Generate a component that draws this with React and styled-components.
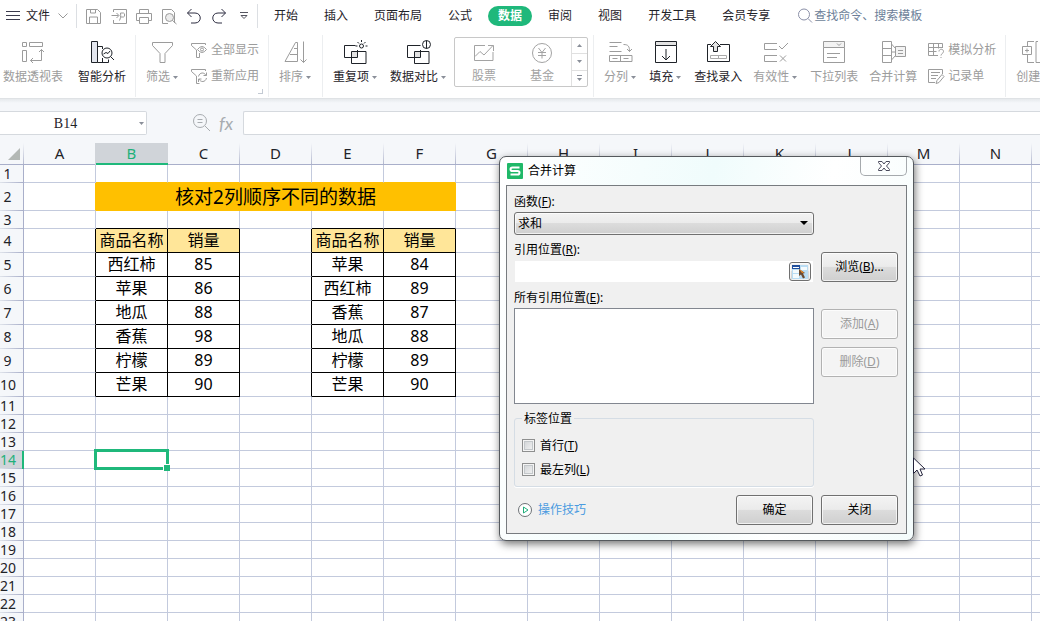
import styled, { createGlobalStyle, css } from "styled-components";

const columns = "ABCDEFGHIJKLMNO".split("");
const rowNumbers = Array.from({ length: 23 }, (_, i) => i + 1);

const leftTable = [["西红柿", 85], ["苹果", 86], ["地瓜", 88], ["香蕉", 98], ["柠檬", 89], ["芒果", 90]];
const rightTable = [["苹果", 84], ["西红柿", 89], ["香蕉", 87], ["地瓜", 88], ["柠檬", 89], ["芒果", 90]];

const icons = {
    save: <path d="M.5 1.5h11l3 3v11H.5zM3.5 15v-6h8v6M4.5 2v3h5V2" />,
    exportPdf: <path d="M2.5 4V1.5h13v14h-13V12M.5 7.5h7M5.5 5l2.5 2.5L5.5 10M8.500 12.500c1-2 1.500-4 1-7.500h3c1.500 0 1.500 4 0 4h-3" />,
    print: <path d="M3.500 5.500v-4h9v4M3.500 12.500h-3v-7h15v7h-3M3.500 9.500h9v6h-9z" />,
    preview: (
        <>
            <path d="M7 15.500H1.500v-14h9l3 3V15" />
            <circle cx="8.500" cy="9.500" r="4" fill="#ececec" />
            <path d="M11.500 12.500l4 3.500" />
        </>
    ),
    undo: <path d="M5.500 1L1.500 5l4 4M1.500 5h7.500c7 0 7 10 0 10H5" />,
    redo: <path d="M10.500 1l4 4-4 4M14.500 5H7c-7 0-7 10 0 10h4" />,
    pivot: (
        <>
            <path d="M1.500 2.500h4v4h-4zM8.500 2.500h13v4h-13zM1.500 10.500h4v11h-4z" />
            <path d="M20.500 9.500v11h-11M18 12l2.500-2.500L23 12M12 18l-2.500 2.500L12 23" />
        </>
    ),
    smart: (
        <>
            <path d="M1.500 1.500h6v21h-6z" fill="#e3e6ee" />
            <path d="M7.500 6.500h5V9M7.500 22.500h11v-3M12.500 18v4.500" />
            <circle cx="17" cy="13" r="5" />
            <path d="M20.500 16.500L24 20M13.500 14l2.500-1.500 2 1 2-2.500" />
        </>
    ),
    filter: <path d="M1.500 2.500h20v3l-7.500 8v9H9v-9l-7.500-8z" />,
    showAll: (
        <>
            <path d="M14.500 3V1.500H.5v2l5 4.500v7.500h3V11" />
            <path d="M6.500 7.500q4.500-6 9 0q-4.500 6-9 0z" />
            <circle cx="11" cy="7.500" r="1.500" />
        </>
    ),
    reapply: (
        <>
            <path d="M14.500 3V1.500H.5v2l5 4.500v7.500h3" />
            <path d="M7.500 8.500c1-4.500 6-4.500 7.500-1M15.500 4.500v3h-3M15.500 10c-1 4.500-6 4.500-7.500 1M7.500 14v-3h3" />
        </>
    ),
    sort: (
        <>
            <path d="M1 21.500L11.500 2.500h2v19zM10 8.500h3.500M6 14.500h7.500" />
            <path d="M19.500 1.500v21M16.500 19.500l3 3 3-3" />
        </>
    ),
    duplicate: (
        <>
            <path d="M7.500 11.500h6v6h-6z" fill="#e3e3e3" stroke="none" />
            <path d="M13.500 10v7.500H.5v-12h11M7.500 11.500h14.500v12H7.500z" />
            <circle cx="17.500" cy="6" r="2" />
            <path d="M17.500 0v2M13.500 2l1.500 1.500M21.500 2L20 3.500M11.500 6h2M21.500 6h2" />
        </>
    ),
    compare: (
        <>
            <path d="M7.500 11.500h6v6h-6z" fill="#e3e3e3" stroke="none" />
            <path d="M13.500 10v7.500H.5v-12h13M7.500 11.500h14.500v12H7.500z" />
            <circle cx="19.500" cy="4.500" r="4" />
            <path d="M19.500 .5v8" />
        </>
    ),
    stock: <path d="M11 2.500H.5v15h18.500V9M1 13.500l5-5 4 3.500 9-9.500M14 2.500h5.500V8" />,
    fund: (
        <>
            <circle cx="10" cy="10" r="9.500" />
            <path d="M6.500 5l3.500 4.500L13.500 5M6 9.500h8M6 12.500h8M10 9.500v6" />
        </>
    ),
    split: <path d="M.5 2.500h12M.5 6.500h8M.5 11.500h12M14.500 4.500c5 0 6 2 6 7M18 9l2.500 2.500L23 9M.5 15.500h22.500v6H.5zM11.500 15.500v6M3.500 18.500h5M14.500 18.500h5" />,
    fill: (
        <>
            <path d="M1.500 1.500h21v4h-21z" fill="#e3e3e3" />
            <path d="M1.500 5.500v17h21v-17M12 9v11M8 16l4 4 4-4" />
        </>
    ),
    find: (
        <>
            <path d="M5 4.500H1.500v17h22v-17H14" />
            <path d="M7.500 11.500V6.500h-3l5-5 5 5h-3v5z" fill="#e3e3e3" />
            <path d="M4.500 15.500h16v3h-16zM12.500 15.500v3" stroke="#aaa" />
        </>
    ),
    validity: <path d="M13 3.500H.5v6H13M15 6l3 3 6-6M13 15.500H.5v6H13M16 15.500l6 6M22 15.500l-6 6" />,
    dropdown: (
        <>
            <path d="M1.500 1.500h21v6h-21z" fill="#f3f3f3" />
            <path d="M1.500 7.500v15h21v-15M15 3.500l2 2 2-2M5 13.500h13M5 17.500h10" />
        </>
    ),
    merge: (
        <>
            <path d="M1.500 1.500h9v21h-9zM1.500 8.500h9M1.500 15.500h9M10.500 4l4 4.500M10.500 20l4-4.500M10.500 12h4" />
            <path d="M14.500 6.500h10v10h-10z" fill="#f3f3f3" />
            <path d="M17 10.500h5M17 13.500h5" />
        </>
    ),
    whatIf: (
        <>
            <path d="M10 13.500H.5v-12h14V6M.5 5.500h14M5.500 1.500v12M.5 9.500h8M10.500 1.500v5" />
            <path d="M11 9.500c0-3 4.500-3 4.500 0 0 2-2.500 2-2.500 4M13 15v1" />
        </>
    ),
    record: <path d="M14.500 6V1.500H.5v13H7M3 4.500h9M3 7.500h7M3 10.500h5M9 12.500l5-6 2 2-5 6-3 1z" />,
    outline: <path d="M12 1.500H5.500V6M5.500 15v7.500H12M.5 6.500h9v8h-9zM5 8.500v4M3 10.500h4M16 1.500h-2v21h8" />,
    search: (
        <>
            <circle cx="6" cy="6.500" r="5.500" />
            <path d="M10 10.500l4 4" />
        </>
    ),
    zoomOut: (
        <>
            <circle cx="7" cy="7" r="6.500" />
            <path d="M12 12l5 5M4.500 5.500h5M4.500 8.500h5" />
        </>
    ),
};

function Icon({ name, size = 24 }) {
    return (
        <Svg $size={size} viewBox={`0 0 ${size} ${size}`} aria-hidden="true">
            {icons[name]}
        </Svg>
    );
}

function Caret({ flip }) {
    return (
        <CaretSvg viewBox="0 0 5 3" aria-hidden="true">
            <path d={flip ? "M0 3h5L2.500 0z" : "M0 0h5L2.500 3z"} />
        </CaretSvg>
    );
}

function Tool({ icon, label, menu, off }) {
    return (
        <ToolButton type="button" disabled={off}>
            <Icon name={icon} />
            <ToolLabel $menu={menu}>
                {label}
                {menu && <Caret />}
            </ToolLabel>
        </ToolButton>
    );
}

function SmallTool({ icon, label }) {
    return (
        <SmallButton type="button" disabled>
            <Icon name={icon} size={16} />
            {label}
        </SmallButton>
    );
}

function MenuBar() {
    const tabs = ["开始", "插入", "页面布局", "公式", "数据", "审阅", "视图", "开发工具", "会员专享"];
    return (
        <MenuRow>
            <FileButton type="button">
                <FileSvg viewBox="0 0 14 12" aria-hidden="true">
                    <path d="M0 1.500h14M0 5.500h14M0 9.500h14" />
                </FileSvg>
                文件
                <Chevron viewBox="0 0 10 6" aria-hidden="true">
                    <path d="M.5.5L5 5 9.500.5" />
                </Chevron>
            </FileButton>
            <QuickBar>
                <QuickButton type="button" aria-label="保存" $pale><Icon name="save" size={16} /></QuickButton>
                <QuickButton type="button" aria-label="输出为PDF" $pale><Icon name="exportPdf" size={16} /></QuickButton>
                <QuickButton type="button" aria-label="打印" $pale><Icon name="print" size={16} /></QuickButton>
                <QuickButton type="button" aria-label="打印预览" $pale><Icon name="preview" size={16} /></QuickButton>
                <QuickButton type="button" aria-label="撤销"><Icon name="undo" size={16} /></QuickButton>
                <QuickButton type="button" aria-label="恢复"><Icon name="redo" size={16} /></QuickButton>
                <QuickButton type="button" aria-label="更多">
                    <MoreSvg viewBox="0 0 8 8" aria-hidden="true">
                        <path d="M0 .5h8M1 3.500h6L4 6.500z" />
                    </MoreSvg>
                </QuickButton>
            </QuickBar>
            <Tabs>
                {tabs.map((tab) => (
                    <Tab type="button" key={tab} $active={tab === "数据"}>{tab}</Tab>
                ))}
            </Tabs>
            <SearchBox>
                <Icon name="search" size={16} />
                <SearchInput aria-label="搜索" placeholder="查找命令、搜索模板" />
            </SearchBox>
        </MenuRow>
    );
}

function Ribbon() {
    return (
        <RibbonRow>
            <Group $wide>
                <Tool icon="pivot" label="数据透视表" off />
                <Tool icon="smart" label="智能分析" />
            </Group>
            <Group>
                <Tool icon="filter" label="筛选" menu off />
                <SmallStack>
                    <SmallTool icon="showAll" label="全部显示" />
                    <SmallTool icon="reapply" label="重新应用" />
                </SmallStack>
                <Launcher />
            </Group>
            <Group>
                <Tool icon="sort" label="排序" menu off />
            </Group>
            <Group $tight>
                <Tool icon="duplicate" label="重复项" menu />
                <Tool icon="compare" label="数据对比" menu />
                <Gallery>
                    <GalleryItem type="button" disabled><Icon name="stock" size={20} />股票</GalleryItem>
                    <GalleryItem type="button" disabled><Icon name="fund" size={20} />基金</GalleryItem>
                    <Scroller>
                        <ScrollButton type="button" aria-label="上一行" disabled><Caret flip /></ScrollButton>
                        <ScrollButton type="button" aria-label="下一行" disabled><Caret /></ScrollButton>
                        <ScrollButton type="button" aria-label="展开" disabled $more><Caret /></ScrollButton>
                    </Scroller>
                </Gallery>
            </Group>
            <Group>
                <Tool icon="split" label="分列" menu off />
                <Tool icon="fill" label="填充" menu />
                <Tool icon="find" label="查找录入" />
                <Tool icon="validity" label="有效性" menu off />
                <Tool icon="dropdown" label="下拉列表" off />
                <Tool icon="merge" label="合并计算" off />
                <SmallStack>
                    <SmallTool icon="whatIf" label="模拟分析" />
                    <SmallTool icon="record" label="记录单" />
                </SmallStack>
            </Group>
            <Group>
                <Tool icon="outline" label="创建组" off />
            </Group>
        </RibbonRow>
    );
}

function FormulaBar() {
    return (
        <FormulaRow>
            <NameBox>
                <NameInput aria-label="名称框" defaultValue="B14" />
                <Caret />
            </NameBox>
            <FormulaTools>
                <Icon name="zoomOut" size={18} />
                <Fx>fx</Fx>
            </FormulaTools>
            <FormulaInput aria-label="编辑栏" />
        </FormulaRow>
    );
}

// works out what a cell of the sheet holds and which of its edges are coloured
function getCell(row, col) {
    const cell = { right: "#c3cadd", bottom: "#c3cadd" };
    const inBlock = (r, c) => r >= 4 && r <= 10 && ((c >= 1 && c <= 2) || (c >= 4 && c <= 5));
    const inTitle = (r, c) => r === 2 && c >= 1 && c <= 5;

    if (inBlock(row, col) || inBlock(row, col + 1)) cell.right = "#000";
    if (inBlock(row, col) || inBlock(row + 1, col)) cell.bottom = "#000";
    if (inTitle(row, col) || inTitle(row, col + 1)) cell.right = "#ffc000";
    if (inTitle(row, col) || inTitle(row + 1, col)) cell.bottom = "#ffc000";

    if (inBlock(row, col)) {
        const data = col < 3 ? leftTable : rightTable;
        const index = (col - 1) % 3;
        cell.text = row === 4 ? ["商品名称", "销量"][index] : data[row - 5][index];
        cell.fill = row === 4 ? "#ffe699" : "#fff";
    }
    return cell;
}

function Sheet() {
    const height = (row) => (row === 2 ? 28 : row >= 4 && row <= 10 ? 24 : 18);
    return (
        <SheetArea>
            <Grid>
                <colgroup>
                    <NumberCol />
                    {columns.map((name) => <LetterCol key={name} />)}
                </colgroup>
                <thead>
                    <tr>
                        <Corner aria-label="全选">
                            <CornerSvg viewBox="0 0 12 12" aria-hidden="true"><path d="M12 0v12H0z" /></CornerSvg>
                        </Corner>
                        {columns.map((name) => (
                            <ColumnHead key={name} scope="col" $active={name === "B"}>{name}</ColumnHead>
                        ))}
                    </tr>
                </thead>
                <tbody>
                    {rowNumbers.map((row) => (
                        <Row key={row} $height={height(row)}>
                            <RowHead scope="row" $active={row === 14}>{row}</RowHead>
                            {columns.map((name, col) => {
                                if (row === 2 && col > 1 && col <= 5) return null;
                                if (row === 2 && col === 1) {
                                    return <TitleCell key={name} colSpan={5}>核对2列顺序不同的数据</TitleCell>;
                                }
                                const cell = getCell(row, col);
                                return (
                                    <Cell key={name} $right={cell.right} $bottom={cell.bottom} $fill={cell.fill}>
                                        {cell.text}
                                        {row === 14 && name === "B" && <Selection />}
                                    </Cell>
                                );
                            })}
                        </Row>
                    ))}
                </tbody>
            </Grid>
        </SheetArea>
    );
}

function ConsolidateDialog() {
    return (
        <DialogFrame role="dialog" aria-labelledby="dialog-title">
            <TitleBar>
                <Logo viewBox="0 0 16 16" aria-hidden="true">
                    <rect width="16" height="16" rx="1" />
                    <path d="M12.500 4.500h-7q-2 0-2 1.800t2 1.700h5q2 0 2 1.800t-2 1.700h-7" />
                </Logo>
                <DialogTitle id="dialog-title">合并计算</DialogTitle>
                <CloseButton type="button" aria-label="关闭窗口">
                    <CloseSvg viewBox="0 0 12 10" aria-hidden="true">
                        <path d="M.5.5h3.500L6 3 8 .5h3.500v1L8.500 5l3 3.500v1H8L6 7 4 9.500H.5v-1L3.500 5l-3-3.500z" />
                    </CloseSvg>
                </CloseButton>
            </TitleBar>
            <Panel>
                <FormGrid>
                    <Field>
                        <Label htmlFor="fn">函数(<u>F</u>):</Label>
                        <SelectBox>
                            <Select id="fn" defaultValue="sum">
                                <option value="sum">求和</option>
                            </Select>
                            <SelectArrow viewBox="0 0 8 4" aria-hidden="true"><path d="M0 0h8L4 4z" /></SelectArrow>
                        </SelectBox>
                    </Field>
                    <span />
                    <Field>
                        <Label htmlFor="ref">引用位置(<u>R</u>):</Label>
                        <RefBox>
                            <RefInput id="ref" />
                            <PickButton type="button" aria-label="选择区域">
                                <PickSvg viewBox="0 0 16 14" aria-hidden="true">
                                    <rect width="16" height="14" fill="#b9dcf3" />
                                    <path d="M1 5h6v3H1zM1 9h6v4H1zM9 2h6v3H9z" fill="#f4fafd" />
                                    <path d="M0 0h8v4H0z" fill="#1f4f9c" />
                                    <path d="M1 2h6v1H1z" fill="#fff" />
                                    <path d="M7 4l6 4-2 .5 2 4-2 1-2-4-2 1.500z" fill="#6b4a32" />
                                    <path d="M7 4l5 3.500-2 .5z" fill="#f08a24" />
                                </PickSvg>
                            </PickButton>
                        </RefBox>
                    </Field>
                    <SideButtons $end>
                        <WinButton type="button">浏览(<u>B</u>)...</WinButton>
                    </SideButtons>
                    <Field>
                        <Label htmlFor="refs">所有引用位置(<u>E</u>):</Label>
                        <RefList id="refs" size={4} />
                    </Field>
                    <SideButtons>
                        <WinButton type="button" disabled>添加(<u>A</u>)</WinButton>
                        <WinButton type="button" disabled>删除(<u>D</u>)</WinButton>
                    </SideButtons>
                </FormGrid>
                <LabelGroup>
                    <Legend>标签位置</Legend>
                    <CheckLabel><CheckBox type="checkbox" /><span>首行(<u>T</u>)</span></CheckLabel>
                    <CheckLabel><CheckBox type="checkbox" /><span>最左列(<u>L</u>)</span></CheckLabel>
                </LabelGroup>
                <DialogFooter>
                    <TipsLink href="#tips">
                        <TipsSvg viewBox="0 0 14 14" aria-hidden="true">
                            <circle cx="7" cy="7" r="6.500" />
                            <path d="M5.500 4v6L10 7z" />
                        </TipsSvg>
                        操作技巧
                    </TipsLink>
                    <WinButton type="button">确定</WinButton>
                    <WinButton type="button">关闭</WinButton>
                </DialogFooter>
            </Panel>
            <Pointer viewBox="0 0 13 20" aria-hidden="true">
                <path d="M.5 1v15.500l3.500-3.500 3 6 2.500-1-2.500-6h5z" />
            </Pointer>
        </DialogFrame>
    );
}

function App() {
    return (
        <>
            <GlobalStyle />
            <Window>
                <MenuBar />
                <Ribbon />
                <FormulaBar />
                <Sheet />
                <ConsolidateDialog />
            </Window>
        </>
    );
}
export default App;

const GlobalStyle = createGlobalStyle`
    * {
        box-sizing: border-box;
    }
    body {
        margin: 0;
        overflow: hidden;
        background-color: #f5f7fa;
    }
    body, button, input, select {
        font-family: "Noto Sans", "Noto Sans CJK SC", sans-serif;
        font-size: 12px;
        line-height: 18px;
        color: #1f2329;
    }
    button {
        padding: 0;
        border: none;
        background: none;
        white-space: nowrap;
    }
`;
const Window = styled.div`
    position: relative;
    display: flex;
    flex-direction: column;
    height: 100vh;
    overflow: hidden;
`;
const Svg = styled.svg`
    flex: none;
    width: ${(props) => props.$size}px;
    height: ${(props) => props.$size}px;
    fill: none;
    stroke: currentColor;
    overflow: visible;
`;
const CaretSvg = styled.svg`
    flex: none;
    width: 5px;
    height: 3px;
    fill: #8a8f99;
`;

const MenuRow = styled.header`
    display: flex;
    align-items: center;
    flex: none;
    height: 32px;
    background-color: #fff;
`;
const FileButton = styled.button`
    display: flex;
    align-items: center;
    gap: 6px;
    height: 24px;
    padding: 0 8px 0 6px;
    border-right: 1px solid #dcdfe3;
`;
const FileSvg = styled.svg`
    width: 14px;
    height: 12px;
    stroke: #3b3b4d;
`;
const Chevron = styled.svg`
    width: 10px;
    height: 6px;
    margin-left: 2px;
    fill: none;
    stroke: #999;
`;
const QuickBar = styled.div`
    display: flex;
    align-items: center;
    gap: 9px;
    height: 24px;
    padding: 0 9px;
    border-right: 1px solid #dcdfe3;
`;
const QuickButton = styled.button`
    display: flex;
    color: ${(props) => (props.$pale ? "#9a9a9a" : "#2e2e42")};
`;
const MoreSvg = styled.svg`
    width: 8px;
    height: 8px;
    margin-left: 4px;
    fill: none;
    stroke: #55555f;
`;
const Tabs = styled.nav`
    display: flex;
    margin-left: 3px;
`;
const Tab = styled.button`
    height: 20px;
    margin: 0 3px;
    padding: 0 10px;
    border-radius: 10px;
    ${(props) => props.$active && css`
        background-color: #1fb87b;
        color: #fff;
        font-weight: bold;
    `}
`;
const SearchBox = styled.div`
    display: flex;
    align-items: center;
    flex: 1;
    min-width: 130px;
    margin-left: 15px;
    color: #8b90a8;
`;
const SearchInput = styled.input`
    flex: 1;
    min-width: 0;
    padding: 0;
    border: none;
    outline: none;
    background: none;

    &::placeholder {
        color: #6d7f99;
        opacity: 1;
    }
`;

const RibbonRow = styled.div`
    display: flex;
    flex: none;
    height: 67px;
    padding: 3px 0 1px;
    overflow: hidden;
    background-color: #fff;
    border-bottom: 1px solid #dfe2e5;
`;
const Group = styled.div`
    position: relative;
    display: flex;
    flex: none;
    align-items: flex-start;
    gap: ${(props) => (props.$wide ? 15 : 11)}px;
    padding: 0 ${(props) => (props.$tight ? 5 : 9)}px 0 ${(props) => (props.$wide ? 3 : 10)}px;
    border-right: 1px solid #eceef0;
`;
const ToolButton = styled.button`
    display: flex;
    flex-direction: column;
    align-items: center;
    gap: 4px;
    padding-top: 5px;

    &:disabled {
        color: #9c9c9c;
    }
`;
const ToolLabel = styled.span`
    display: flex;
    align-items: center;
    gap: 3px;
    padding-right: ${(props) => (props.$menu ? 2 : 0)}px;
`;
const SmallStack = styled.div`
    display: flex;
    flex-direction: column;
    gap: 8px;
    padding-top: 6px;
`;
const SmallButton = styled.button`
    display: flex;
    align-items: center;
    gap: 4px;

    &:disabled {
        color: #9c9c9c;
    }
`;
const Launcher = styled.span`
    position: absolute;
    right: 5px;
    bottom: 3px;
    width: 5px;
    height: 5px;
    border-right: 1px solid #c3cad3;
    border-bottom: 1px solid #c3cad3;
`;
const Gallery = styled.div`
    display: flex;
    height: 50px;
    margin: 2px 0 0 -5px;
    border: 1px solid #c8c8c8;
    border-radius: 2px;
`;
const GalleryItem = styled.button`
    display: flex;
    flex-direction: column;
    align-items: center;
    gap: 4px;
    width: 58px;
    padding-top: 5px;

    &:disabled {
        color: #a3a3a3;
    }
`;
const Scroller = styled.div`
    display: flex;
    flex-direction: column;
    width: 16px;
    border-left: 1px solid #e0e0e0;
`;
const ScrollButton = styled.button`
    display: flex;
    flex: 1;
    align-items: center;
    justify-content: center;

    & + & {
        border-top: 1px solid #e0e0e0;
    }
    ${(props) => props.$more && css`
        flex-direction: column;
        gap: 2px;

        &::before {
            content: "";
            width: 5px;
            height: 1px;
            background-color: #8a8f99;
        }
    `}
`;

const FormulaRow = styled.div`
    display: flex;
    flex: none;
    height: 44px;
    padding: 12px 0 8px;
    background: linear-gradient(#e6e9ec, #f5f7fa 4px);
`;
const NameBox = styled.div`
    display: flex;
    align-items: center;
    width: 147px;
    padding-right: 2px;
    border: 1px solid #d5d9de;
    border-left: none;
    border-radius: 0 2px 2px 0;
    background-color: #fff;
`;
const NameInput = styled.input`
    flex: 1;
    min-width: 0;
    padding: 2px 8px 0 0;
    border: none;
    outline: none;
    background: none;
    text-align: center;
    font-family: "Liberation Serif", serif;
    font-size: 14px;
`;
const FormulaTools = styled.div`
    display: flex;
    align-items: center;
    gap: 8px;
    width: 96px;
    padding-left: 46px;
    color: #a8acb0;
`;
const Fx = styled.span`
    font-family: Lato, sans-serif;
    font-size: 18px;
    font-style: italic;
`;
const FormulaInput = styled.input`
    flex: 1;
    min-width: 0;
    border: 1px solid #d5d9de;
    border-right: none;
    border-radius: 2px 0 0 2px;
    outline: none;
    background-color: #fff;
`;

const SheetArea = styled.main`
    flex: 1;
    min-height: 0;
    overflow: hidden;
    background-color: #fff;
`;
const Grid = styled.table`
    width: 0;
    table-layout: fixed;
    border-collapse: separate;
    border-spacing: 0;
    line-height: 16px;
    text-align: center;
    white-space: nowrap;
`;
const NumberCol = styled.col`
    width: 24px;
`;
const LetterCol = styled.col`
    width: 72px;
`;
const headCell = css`
    padding: 0;
    font-weight: normal;
    color: ${(props) => (props.$active ? "#1fb07a" : "#1f2329")};
    background-color: ${(props) => (props.$active ? "#d0d4d9" : "#f5f7fa")};
    background-repeat: no-repeat;
`;
const ColumnHead = styled.th`
    ${headCell}
    height: 22px;
    padding: 0 1px 1px 0;
    font-size: 15px;
    background-image: linear-gradient(#f5f7fa, #b4b9cf);
    background-position: right;
    background-size: ${(props) => (props.$active ? 0 : 1)}px 100%;
    border-bottom: 1px solid #a9afca;
    ${(props) => props.$active && css`
        padding-bottom: 0;
        border-bottom: 2px solid #1fb87b;
        box-shadow: -1px 0 #d0d4d9;
    `}
`;
const Corner = styled(ColumnHead)`
    padding: 1px 4px 0 8px;
`;
const CornerSvg = styled.svg`
    display: block;
    width: 12px;
    height: 12px;
    fill: #b3b8b5;
`;
const Row = styled.tr`
    height: ${(props) => props.$height}px;
`;
const RowHead = styled.th`
    ${headCell}
    padding-right: 8px;
    font-size: 14px;
    background-image: linear-gradient(to right, #dfe3ea, #a9afca);
    background-position: bottom;
    background-size: 100% 1px;
    border-right: 1px solid #a9afca;
    ${(props) => props.$active && css`
        padding-right: 7px;
        border-right: 2px solid #1fb87b;
    `}
`;
const Cell = styled.td`
    position: relative;
    padding: 0 0 1px;
    font-size: 16px;
    color: #000;
    background-color: ${(props) => props.$fill || "#fff"};
    border-right: 1px solid ${(props) => props.$right};
    border-bottom: 1px solid ${(props) => props.$bottom};
`;
const TitleCell = styled.td`
    padding: 0 1px 0 0;
    font-size: 19px;
    color: #000;
    background-color: #ffc000;
`;
const Selection = styled.div`
    position: absolute;
    z-index: 1;
    inset: -2px;
    border: 3px solid #1fb87b;

    &::after {
        content: "";
        position: absolute;
        right: -4px;
        bottom: -4px;
        width: 6px;
        height: 6px;
        border: solid #fff;
        border-width: 1px 0 0 1px;
        background-color: #1fb87b;
    }
`;

const DialogFrame = styled.section`
    position: absolute;
    z-index: 2;
    left: 499px;
    top: 156px;
    width: 415px;
    padding: 0 6px 6px;
    border: 1px solid #55595d;
    border-radius: 7px;
    background: linear-gradient(100deg, #fff, #f0fcfc 45%, #fff 70%, #f4fcfc);
    box-shadow: 1px 3px 9px rgba(0, 0, 0, 0.55);
    color: #000;
`;
const TitleBar = styled.div`
    display: flex;
    align-items: center;
    gap: 5px;
    height: 28px;
    padding-left: 1px;
`;
const Logo = styled.svg`
    width: 16px;
    height: 16px;
    fill: #1fb868;

    path {
        fill: none;
        stroke: #fff;
        stroke-width: 2;
    }
`;
const DialogTitle = styled.h1`
    flex: 1;
    margin: 0;
    font-size: 12px;
    font-weight: normal;
`;
const CloseButton = styled.button`
    display: flex;
    align-items: center;
    justify-content: center;
    align-self: flex-start;
    width: 47px;
    height: 19px;
    border: 1px solid #a5a9ad;
    border-top: none;
    border-radius: 0 0 5px 5px;
`;
const CloseSvg = styled.svg`
    width: 12px;
    height: 10px;
    fill: #fff;
    stroke: #4a4a5c;
`;
const Panel = styled.form`
    padding: 7px 8px 8px 7px;
    border: 1px solid #777b7f;
    background-color: #f0f0f0;
`;
const FormGrid = styled.div`
    display: grid;
    grid-template-columns: 1fr 77px;
    gap: 6px 7px;
`;
const Field = styled.div`
    display: flex;
    flex-direction: column;
    gap: 1px;
`;
const Label = styled.label`
    height: 18px;
`;
const winSurface = css`
    border: 1px solid #707070;
    border-radius: 3px;
    background: linear-gradient(#f3f3f3, #ebebeb 48%, #dcdcdc 50%, #cfcfcf);
    box-shadow: inset 0 0 0 1px rgba(255, 255, 255, 0.7);
    color: #000;
`;
const SelectBox = styled.div`
    position: relative;
    display: flex;
`;
const Select = styled.select`
    ${winSurface}
    appearance: none;
    flex: 1;
    height: 23px;
    padding: 0 20px 0 3px;
    outline: none;
`;
const SelectArrow = styled.svg`
    position: absolute;
    right: 6px;
    top: 9px;
    width: 8px;
    height: 4px;
    pointer-events: none;
`;
const RefBox = styled.div`
    display: flex;
    align-items: center;
    height: 23px;
    padding-right: 2px;
    border: 1px solid #f0f0f0;
    background-color: #fff;
`;
const RefInput = styled.input`
    flex: 1;
    min-width: 0;
    border: none;
    outline: none;
    background: none;
`;
const PickButton = styled.button`
    ${winSurface}
    display: flex;
    align-items: center;
    justify-content: center;
    width: 22px;
    height: 19px;
`;
const PickSvg = styled.svg`
    width: 16px;
    height: 14px;
`;
const RefList = styled.select`
    height: 96px;
    border: 1px solid #828790;
    border-radius: 0;
    outline: none;
    background-color: #fff;
`;
const SideButtons = styled.div`
    display: flex;
    flex-direction: column;
    justify-content: ${(props) => (props.$end ? "flex-end" : "flex-start")};
    gap: 8px;
    padding: ${(props) => (props.$end ? "0 0 1px" : "20px 0 0")};
`;
const WinButton = styled.button`
    ${winSurface}
    width: 77px;
    height: 30px;

    &:disabled {
        border-color: #b2b2b2;
        background: #f4f4f4;
        color: #9a9a9a;
    }
`;
const LabelGroup = styled.fieldset`
    display: flex;
    flex-direction: column;
    gap: 6px;
    width: 300px;
    margin: 5px 0 8px;
    padding: 10px 7px 7px;
    border: 1px solid #d5dde5;
    border-radius: 3px;
    box-shadow: 0 1px #fff;
`;
const Legend = styled.legend`
    height: 18px;
    padding: 0 2px;
    line-height: 20px;
`;
const CheckLabel = styled.label`
    display: flex;
    align-items: center;
    gap: 5px;
    height: 18px;
`;
const CheckBox = styled.input`
    appearance: none;
    width: 13px;
    height: 13px;
    margin: 0 0 1px;
    border: 1px solid #8e8f8f;
    background: linear-gradient(135deg, #cdd0d3, #f6f6f6);
    box-shadow: inset 0 0 0 1px #f4f4f4, inset 0 0 0 2px #c3c7ca;
`;
const DialogFooter = styled.div`
    display: flex;
    align-items: center;
    gap: 8px;
`;
const TipsLink = styled.a`
    display: flex;
    flex: 1;
    align-items: center;
    gap: 6px;
    padding-left: 4px;
    color: #4a9be0;
    text-decoration: none;
`;
const TipsSvg = styled.svg`
    width: 14px;
    height: 14px;
    fill: #fff;
    stroke: #6d7175;

    path {
        stroke: #1fae7a;
    }
`;
const Pointer = styled.svg`
    position: absolute;
    right: -13px;
    top: 300px;
    width: 13px;
    height: 20px;
    fill: #fff;
    stroke: #22223a;
`;
